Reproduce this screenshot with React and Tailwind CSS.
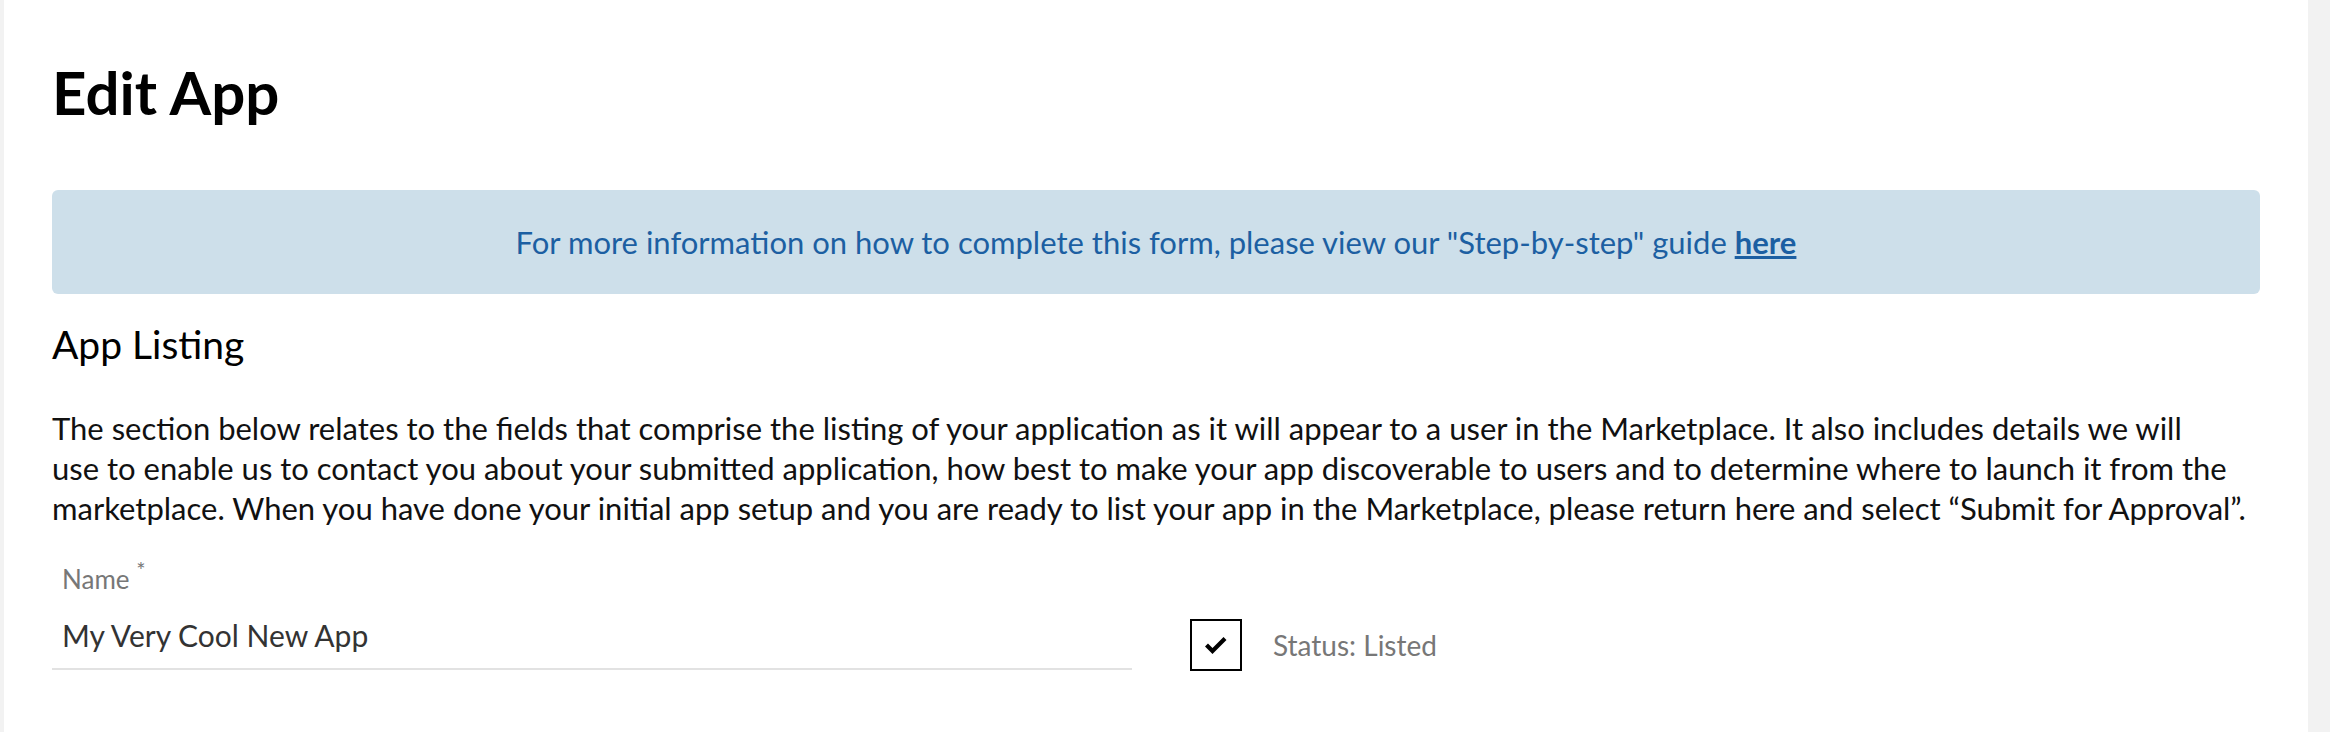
import React from 'react';

const font = "font-['Lato','Liberation_Sans',sans-serif]";

const CheckMark = () => (
    <svg width="26" height="26" viewBox="0 0 26 26" fill="none">
        <path d="M3.5 13 L9.5 19 L22 6.5" stroke="#000" strokeWidth="4.2" strokeLinecap="butt" strokeLinejoin="miter" />
    </svg>
);

const App = () => {
    return (
        <div className={`h-[732px] bg-[#f2f2f2] flex ${font}`}>
            <div className="ml-[4px] mr-[22px] flex-1 bg-white px-12 overflow-hidden">
                <h1 className="pt-[62px] text-[60px] leading-[60px] font-bold text-black">
                    Edit App
                </h1>

                {/* Guide banner */}
                <div className="mt-[68px] h-[104px] rounded-md bg-[#cddfea] flex items-center justify-center">
                    <p className="text-[31px] text-[#1c5fa2]">
                        For more information on how to complete this form, please view our "Step-by-step" guide{' '}
                        <a href="#" className="font-bold underline">here</a>
                    </p>
                </div>

                <h2 className="mt-[31px] text-[39px] leading-[39px] text-black">App Listing</h2>

                <p className="mt-[44px] text-[31px] leading-[40px] text-[#111]">
                    The section below relates to the fields that comprise the listing of your application as it will appear to a user in the Marketplace. It also includes details we will
                    <br />
                    use to enable us to contact you about your submitted application, how best to make your app discoverable to users and to determine where to launch it from the
                    <br />
                    marketplace. When you have done your initial app setup and you are ready to list your app in the Marketplace, please return here and select “Submit for Approval”.
                </p>

                <div className="mt-[39px] flex items-start">
                    <div className="w-[1080px]">
                        <label className="block pl-[10px] text-[26px] leading-[24px] text-[#777]">
                            Name <sup className="text-[22px]">*</sup>
                        </label>
                        <div className="mt-[30px] pl-[10px] pb-[18px] text-[30px] leading-[29px] text-[#333] border-b-2 border-[#e2e2e2]">
                            My Very Cool New App
                        </div>
                    </div>
                    <div className="ml-[58px] mt-[52px] flex items-center gap-[31px]">
                        <div className="w-[52px] h-[52px] border-2 border-black flex items-center justify-center">
                            <CheckMark />
                        </div>
                        <span className="text-[28px] leading-[28px] text-[#777]">Status: Listed</span>
                    </div>
                </div>
            </div>
        </div>
    );
};

export default App;
